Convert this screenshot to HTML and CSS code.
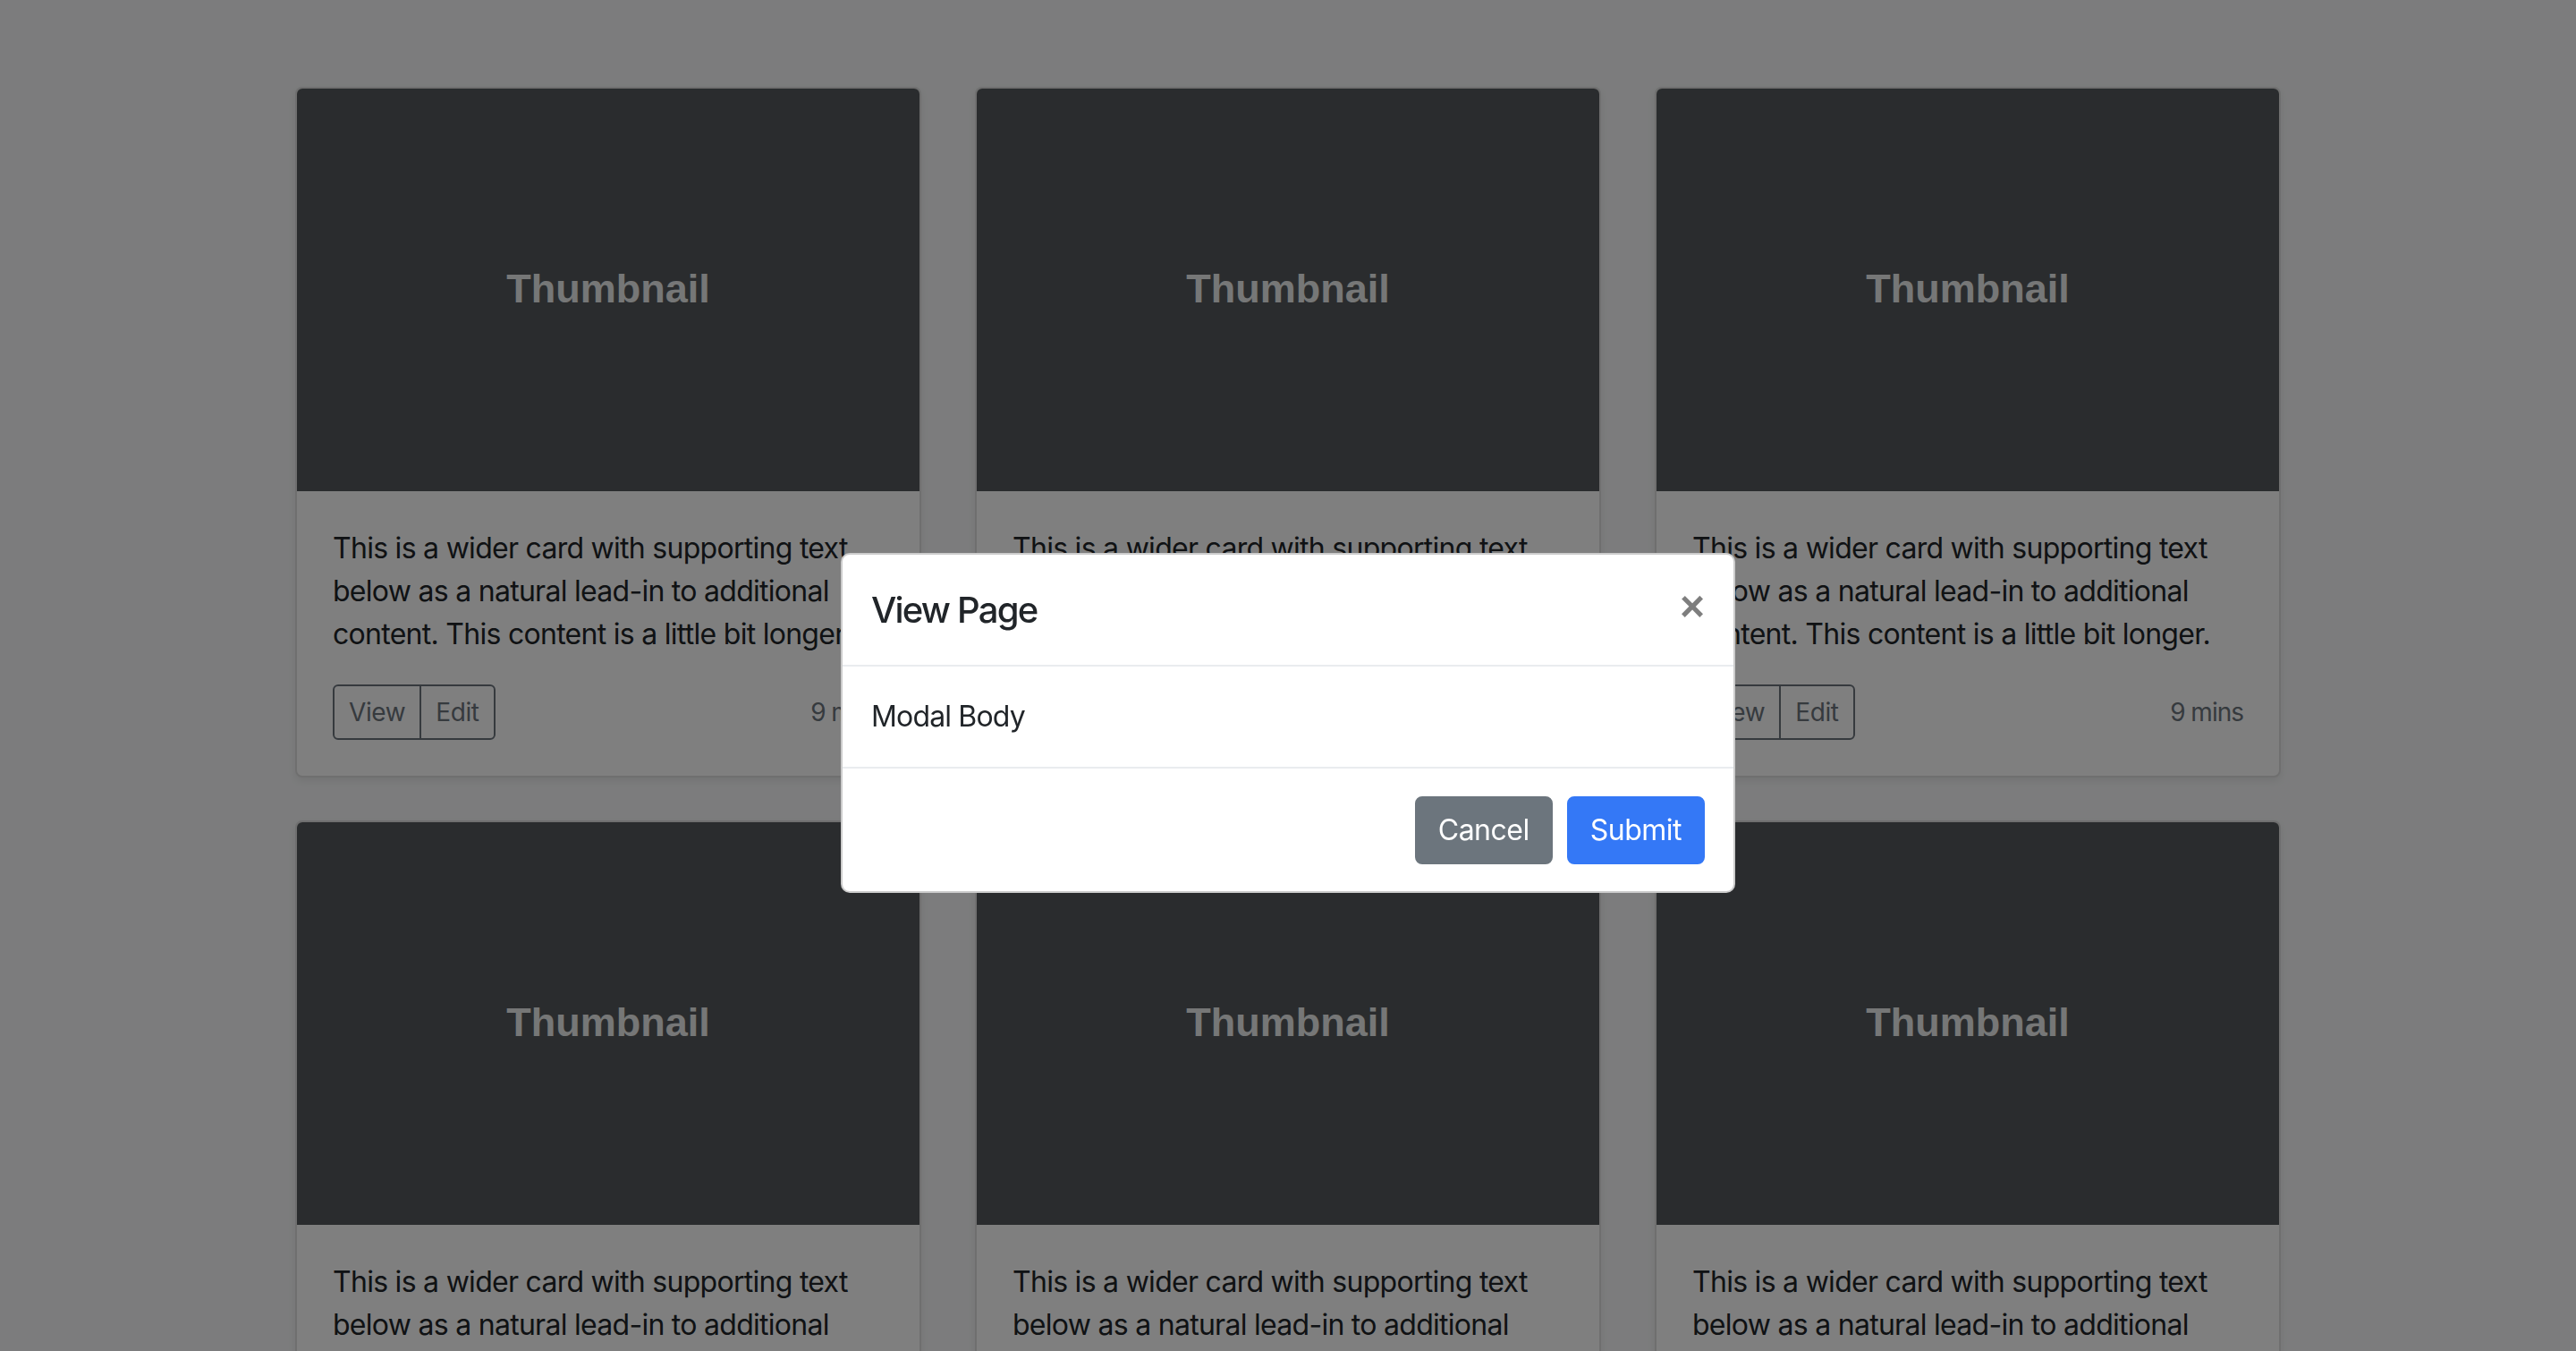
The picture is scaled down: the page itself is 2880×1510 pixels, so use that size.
FILE: index.html
```html
<!DOCTYPE html>
<html lang="en">
<head>
<meta charset="utf-8">
<title>Album</title>
<link rel="stylesheet" href="styles.css">
</head>
<body class="modal-open">
<main class="page">
  <section class="album">
    <div class="container">
      <div class="grid">
        <div class="card">
          <div class="thumb">Thumbnail</div>
          <div class="card-body">
            <p class="card-text">This is a wider card with supporting text below as a natural lead-in to additional content. This content is a little bit longer.</p>
            <div class="card-foot">
              <div class="btn-group"><button class="btn-sm">View</button><button class="btn-sm">Edit</button></div>
              <small class="muted">9 mins</small>
            </div>
          </div>
        </div>
        <div class="card">
          <div class="thumb">Thumbnail</div>
          <div class="card-body">
            <p class="card-text">This is a wider card with supporting text below as a natural lead-in to additional content. This content is a little bit longer.</p>
            <div class="card-foot">
              <div class="btn-group"><button class="btn-sm">View</button><button class="btn-sm">Edit</button></div>
              <small class="muted">9 mins</small>
            </div>
          </div>
        </div>
        <div class="card">
          <div class="thumb">Thumbnail</div>
          <div class="card-body">
            <p class="card-text">This is a wider card with supporting text below as a natural lead-in to additional content. This content is a little bit longer.</p>
            <div class="card-foot">
              <div class="btn-group"><button class="btn-sm">View</button><button class="btn-sm">Edit</button></div>
              <small class="muted">9 mins</small>
            </div>
          </div>
        </div>
        <div class="card">
          <div class="thumb">Thumbnail</div>
          <div class="card-body">
            <p class="card-text">This is a wider card with supporting text below as a natural lead-in to additional content. This content is a little bit longer.</p>
            <div class="card-foot">
              <div class="btn-group"><button class="btn-sm">View</button><button class="btn-sm">Edit</button></div>
              <small class="muted">9 mins</small>
            </div>
          </div>
        </div>
        <div class="card">
          <div class="thumb">Thumbnail</div>
          <div class="card-body">
            <p class="card-text">This is a wider card with supporting text below as a natural lead-in to additional content. This content is a little bit longer.</p>
            <div class="card-foot">
              <div class="btn-group"><button class="btn-sm">View</button><button class="btn-sm">Edit</button></div>
              <small class="muted">9 mins</small>
            </div>
          </div>
        </div>
        <div class="card">
          <div class="thumb">Thumbnail</div>
          <div class="card-body">
            <p class="card-text">This is a wider card with supporting text below as a natural lead-in to additional content. This content is a little bit longer.</p>
            <div class="card-foot">
              <div class="btn-group"><button class="btn-sm">View</button><button class="btn-sm">Edit</button></div>
              <small class="muted">9 mins</small>
            </div>
          </div>
        </div>
      </div>
    </div>
  </section>
</main>

<div class="backdrop"></div>
<div class="modal">
  <div class="modal-content">
    <div class="modal-header">
      <h5 class="modal-title">View Page</h5>
      <button class="close" aria-label="Close">×</button>
    </div>
    <div class="modal-body">Modal Body</div>
    <div class="modal-footer">
      <button class="btn btn-secondary">Cancel</button>
      <button class="btn btn-primary">Submit</button>
    </div>
  </div>
</div>
</body>
</html>
```

FILE: styles.css
```css
html, body {
  margin: 0;
  padding: 0;
}
body {
  font-family: Inter, "Liberation Sans", sans-serif;
  font-size: 32px;
  line-height: 48px;
  color: #212529;
  background: #fff;
}
body.modal-open {
  overflow: hidden;
}
.page {
  height: 1510px;
  overflow: hidden;
}
.album {
  background: #f8f9fa;
  padding: 97px 0 96px;
}
.container {
  width: 2280px;
  margin: 0 auto;
  padding: 0 30px;
  box-sizing: border-box;
}
.grid {
  display: grid;
  grid-template-columns: repeat(3, 700px);
  column-gap: 60px;
  row-gap: 48px;
}
.card {
  background: #fff;
  border: 2px solid rgba(0, 0, 0, 0.125);
  border-radius: 8px;
  box-shadow: 0 4px 8px rgba(0, 0, 0, 0.075);
  overflow: hidden;
}
.thumb {
  height: 450px;
  background: #55595c;
  color: #eceeef;
  font-family: "Liberation Sans", Arial, sans-serif;
  font-weight: 700;
  font-size: 45px;
  display: flex;
  align-items: center;
  justify-content: center;
  padding-bottom: 2px;
  box-sizing: border-box;
}
.card-body {
  padding: 40px;
}
.card-text {
  margin: 0 0 32px;
  letter-spacing: -0.72px;
}
.card-foot {
  display: flex;
  justify-content: space-between;
  align-items: center;
}
.btn-group {
  display: flex;
}
.btn-sm {
  font-family: Inter, "Liberation Sans", sans-serif;
  font-size: 28px;
  line-height: 42px;
  padding: 8px 16px;
  color: #6c757d;
  background: transparent;
  border: 2px solid #6c757d;
  margin: 0;
  letter-spacing: -0.4px;
}
.btn-sm:first-child {
  border-radius: 6px 0 0 6px;
}
.btn-sm:last-child {
  border-radius: 0 6px 6px 0;
  margin-left: -2px;
}
.muted {
  font-size: 28px;
  color: #6c757d;
  letter-spacing: -1px;
}

.backdrop {
  position: fixed;
  inset: 0;
  background: rgba(0, 0, 0, 0.5);
}
.modal {
  position: fixed;
  inset: 0;
  display: flex;
  justify-content: center;
  align-items: flex-start;
  padding-top: 618px;
  box-sizing: border-box;
}
.modal-content {
  width: 1000px;
  background: #fff;
  border: 2px solid rgba(0, 0, 0, 0.2);
  border-radius: 10px;
  box-sizing: border-box;
  overflow: hidden;
}
.modal-header {
  display: flex;
  align-items: flex-start;
  padding: 32px 32px 31px;
  border-bottom: 2px solid #e9ecef;
}
.modal-title {
  margin: 0;
  font-size: 40px;
  line-height: 60px;
  font-weight: 500;
  letter-spacing: -1.8px;
}
.close {
  margin: -32px -32px -32px auto;
  padding: 34px 32px 30px;
  background: transparent;
  border: 0;
  font-family: "Liberation Sans", Arial, sans-serif;
  font-size: 48px;
  font-weight: 700;
  line-height: 1;
  color: #000;
  opacity: 0.5;
  text-shadow: 0 2px 0 #fff;
}
.modal-body {
  padding: 32px;
  letter-spacing: -0.85px;
}
.modal-footer {
  display: flex;
  justify-content: flex-end;
  align-items: center;
  padding: 23px 24px 22px;
  border-top: 2px solid #e9ecef;
}
.btn {
  font-family: Inter, "Liberation Sans", sans-serif;
  font-size: 32px;
  line-height: 48px;
  padding: 12px 24px;
  margin: 8px;
  border: 2px solid transparent;
  border-radius: 8px;
  color: #fff;
  letter-spacing: -0.5px;
}
.btn-secondary {
  background: #6c757d;
  border-color: #6c757d;
}
.btn-primary {
  background: #3478f6;
  border-color: #3478f6;
}
```
